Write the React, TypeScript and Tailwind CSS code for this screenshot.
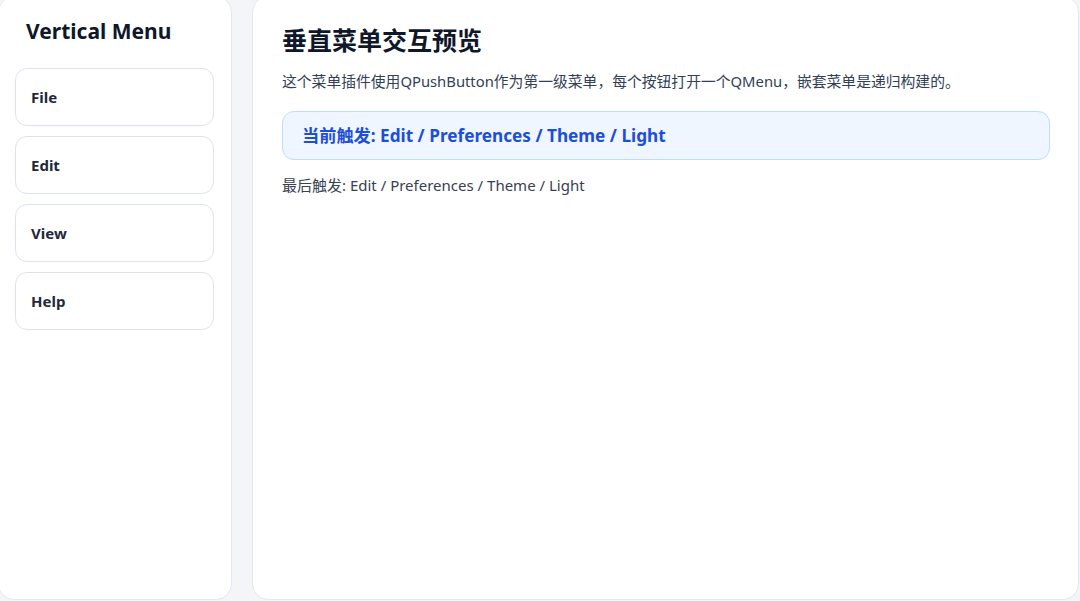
const menus = ["File", "Edit", "View", "Help"];

export default function App() {
  const path = "Edit / Preferences / Theme / Light";

  return (
    <div
      className="h-[601px] w-[1080px] overflow-hidden bg-[#f3f5f9]"
      style={{ fontFamily: '"Noto Sans", "Noto Sans CJK SC", sans-serif' }}
    >
      <div className="-ml-[2px] -mt-1 flex h-[604px] w-[1081px] gap-5">
        {/* Sidebar */}
        <div className="w-[234px] shrink-0 rounded-2xl border border-[#e2e8f0] bg-white px-[16px] pt-[20px]">
          <h2 className="pl-[11px] text-[21px] font-bold leading-[28px] text-[#0f172a]">Vertical Menu</h2>
          <div className="mt-[23px] flex flex-col gap-[10px]">
            {menus.map((m) => (
              <button
                key={m}
                className="h-[58px] w-[199px] rounded-xl border border-[#dde3ec] bg-white pl-[15px] text-left text-[15px] font-bold text-[#1e293b]"
              >
                {m}
              </button>
            ))}
          </div>
        </div>

        {/* Main */}
        <div className="flex-1 rounded-2xl border border-[#e2e8f0] bg-white px-[29px] pt-[26px]">
          <h1 className="text-[25px] font-bold leading-[34px] text-[#0f172a]">垂直菜单交互预览</h1>
          <p className="mt-[14px] text-[14.8px] leading-[20px] text-[#334155]">
            这个菜单插件使用QPushButton作为第一级菜单，每个按钮打开一个QMenu，嵌套菜单是递归构建的。
          </p>
          <div className="mt-[20px] -mr-[1px] flex h-[49px] items-center rounded-xl border border-[#bfdbfe] bg-[#eff6ff] px-[19px]">
            <span className="text-[17.2px] font-bold text-[#1d4ed8]">当前触发: {path}</span>
          </div>
          <p className="mt-[14px] text-[15px] leading-[22px] text-[#374151]">最后触发: {path}</p>
        </div>
      </div>
    </div>
  );
}
